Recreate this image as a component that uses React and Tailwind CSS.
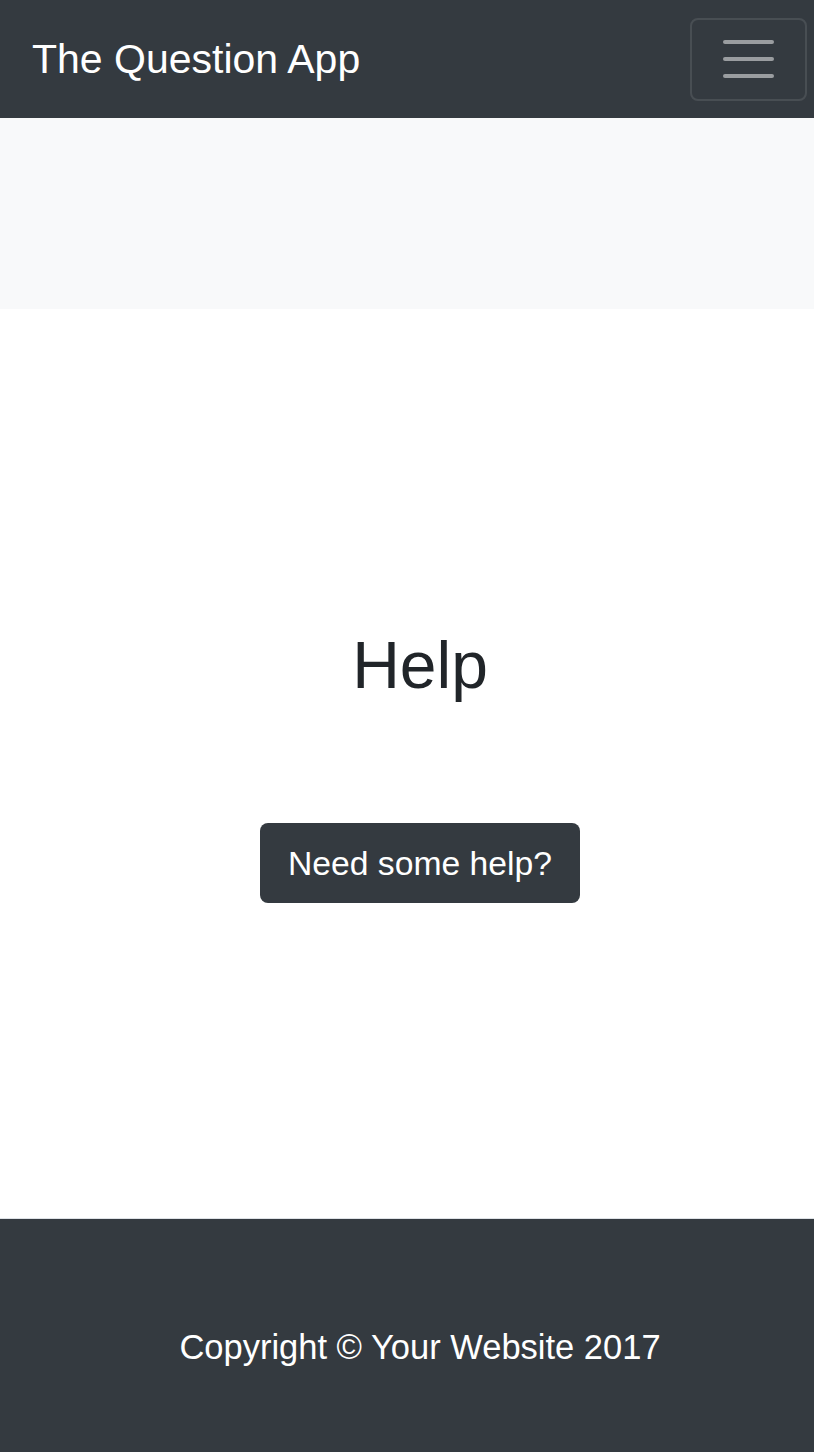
export default function App() {
  return (
    <div className="flex min-h-[1452px] flex-col bg-white font-['Liberation_Sans',Arial,sans-serif]">
      <nav className="flex h-[118px] items-center justify-between bg-[#343a40] pl-8 pr-[7px]">
        <a href="#" className="text-[41px] leading-none text-white">The Question App</a>
        <button
          type="button"
          aria-label="Toggle navigation"
          className="flex h-[83px] w-[117px] flex-col items-center justify-center gap-[13px] rounded-lg border-2 border-white/10"
        >
          <span className="block h-1 w-[51px] rounded-full bg-white/50" />
          <span className="block h-1 w-[51px] rounded-full bg-white/50" />
          <span className="block h-1 w-[51px] rounded-full bg-white/50" />
        </button>
      </nav>

      <header className="h-[191px] bg-[#f8f9fa]" />

      <main className="flex h-[909px] flex-col items-center pl-[26px] pt-[317px]">
        <h1 className="text-[66px] leading-[1.2] text-[#212529]">Help</h1>
        <button
          type="button"
          className="mt-[118px] h-20 w-[320px] rounded-lg bg-[#343a40] text-[33.7px] text-white"
        >
          Need some help?
        </button>
      </main>

      <footer className="h-[234px] border-t border-[#dee2e6] bg-[#343a40] pl-[26px] pt-[103px] text-center">
        <p className="text-[34.5px] leading-normal text-white">Copyright © Your Website 2017</p>
      </footer>
    </div>
  );
}
